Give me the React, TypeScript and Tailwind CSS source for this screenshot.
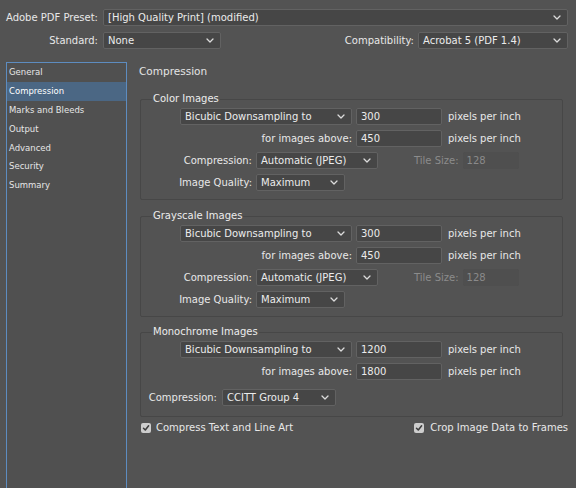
import React from 'react';

const Chevron: React.FC = () => (
  <svg width="8" height="5" viewBox="0 0 8 5" className="shrink-0">
    <polyline points="1,1 4,4 7,1" fill="none" stroke="#dcdcdc" strokeWidth="1.3" strokeLinecap="round" strokeLinejoin="round" />
  </svg>
);

const Select: React.FC<{ value: string; w: string }> = ({ value, w }) => (
  <div className={`${w} h-[17px] shrink-0 flex items-center justify-between pl-[4px] pr-[6px] bg-[#464646] border border-[#626262] rounded-[2px] text-[#ececec]`}>
    <span className="whitespace-nowrap">{value}</span>
    <Chevron />
  </div>
);

const Field: React.FC<{ value: string }> = ({ value }) => (
  <div className="w-[86px] h-[17px] shrink-0 flex items-center pl-[4px] bg-[#464646] border border-[#626262] rounded-[2px] text-[#ececec]">
    {value}
  </div>
);

const Check: React.FC = () => (
  <div className="w-[10px] h-[10px] shrink-0 rounded-[2px] bg-[#cdcdcd] flex items-center justify-center">
    <svg width="8" height="8" viewBox="0 0 8 8">
      <polyline points="1.5,4.2 3.3,6 6.6,1.8" fill="none" stroke="#3b3b3b" strokeWidth="1.5" strokeLinecap="round" strokeLinejoin="round" />
    </svg>
  </div>
);

const ImageGroup: React.FC<{ title: string; res: string; above: string; mono?: boolean; top: string }> = ({ title, res, above, mono, top }) => (
  <fieldset className={`${top} w-[423px] border border-[#474747] rounded-[2px] px-0`}>
    <legend className="ml-[11px] px-[1px] leading-[12px] text-[#ececec]">{title}</legend>
    <div className={`flex flex-col gap-[5px] pt-[3px] ${mono ? 'pb-[10px]' : 'pb-[8px]'}`}>
      <div className="flex items-center pl-[39px]">
        <Select value="Bicubic Downsampling to" w="w-[172px]" />
        <div className="ml-[4px]"><Field value={res} /></div>
        <span className="ml-[6px]">pixels per inch</span>
      </div>
      <div className="flex items-center">
        <span className="w-[211px] text-right">for images above:</span>
        <div className="ml-[4px]"><Field value={above} /></div>
        <span className="ml-[6px]">pixels per inch</span>
      </div>
      {mono ? (
        <div className="flex items-center mt-[4px]">
          <span className="w-[76px] text-right">Compression:</span>
          <div className="ml-[5px]"><Select value="CCITT Group 4" w="w-[114px]" /></div>
        </div>
      ) : (
        <>
          <div className="flex items-center">
            <span className="w-[111px] text-right">Compression:</span>
            <div className="ml-[4px]"><Select value="Automatic (JPEG)" w="w-[122px]" /></div>
            <span className="ml-[36px] text-[#8c8c8c]">Tile Size:</span>
            <div className="ml-[4px] w-[56px] h-[17px] flex items-center pl-[4px] bg-[#4f4f4f] rounded-[2px] text-[#8a8a8a]">128</div>
          </div>
          <div className="flex items-center">
            <span className="w-[111px] text-right">Image Quality:</span>
            <div className="ml-[4px]"><Select value="Maximum" w="w-[89px]" /></div>
          </div>
        </>
      )}
    </div>
  </fieldset>
);

const NAV = ['General', 'Compression', 'Marks and Bleeds', 'Output', 'Advanced', 'Security', 'Summary'];

export default function App() {
  return (
    <div className="w-[576px] h-[488px] overflow-hidden bg-[#535353] text-[#e8e8e8] text-[10px] leading-[12px] font-['DejaVu_Sans',sans-serif]">
      {/* Preset */}
      <div className="flex items-center pt-[9px]">
        <span className="w-[103px] pr-[5px] text-right">Adobe PDF Preset:</span>
        <Select value="[High Quality Print] (modified)" w="w-[465px]" />
      </div>
      {/* Standard / Compatibility */}
      <div className="flex items-center mt-[6px] pr-[8px]">
        <span className="w-[103px] pr-[5px] text-right">Standard:</span>
        <Select value="None" w="w-[118px]" />
        <div className="flex-1" />
        <span className="mr-[4px]">Compatibility:</span>
        <Select value="Acrobat 5 (PDF 1.4)" w="w-[150px]" />
      </div>

      <div className="flex mt-[13px]">
        {/* Sidebar */}
        <div className="ml-[6px] w-[121px] h-[440px] shrink-0 border border-[#5d8cc0] bg-[#505050]">
          {NAV.map((item) => (
            <div
              key={item}
              className={`h-[18.8px] flex items-center pl-[2px] text-[8.5px] ${item === 'Compression' ? 'bg-[#4b6784] text-white' : 'text-[#e6e6e6]'}`}
            >
              {item}
            </div>
          ))}
        </div>

        {/* Content */}
        <div className="ml-[12px] flex flex-col">
          <div className="h-[19px] leading-[19px] text-[10.5px] text-[#e4e4e4]">Compression</div>
          <div className="ml-[1px] mt-[12px] flex flex-col">
            <ImageGroup top="" title="Color Images" res="300" above="450" />
            <ImageGroup top="mt-[10px]" title="Grayscale Images" res="300" above="450" />
            <ImageGroup top="mt-[9px]" title="Monochrome Images" res="1200" above="1800" mono />
          </div>
          <div className="ml-[2px] mt-[5px] w-[427px] flex items-center justify-between">
            <label className="flex items-center gap-[5px]">
              <Check />
              <span>Compress Text and Line Art</span>
            </label>
            <label className="flex items-center gap-[6px]">
              <Check />
              <span>Crop Image Data to Frames</span>
            </label>
          </div>
        </div>
      </div>
    </div>
  );
}
